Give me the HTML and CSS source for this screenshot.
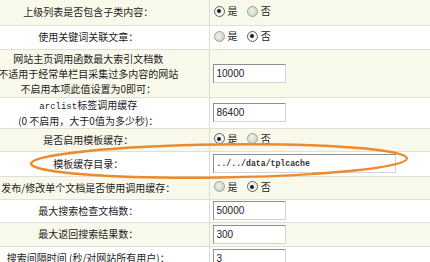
FILE: index.html
```html
<!DOCTYPE html>
<html lang="zh-CN">
<head>
    <meta charset="UTF-8">
    <title>系统基本参数</title>
    <link rel="stylesheet" href="styles.css">
</head>
<body>

    <table class="cfg">
        <colgroup>
            <col class="col-label">
            <col>
        </colgroup>

        <tr class="alt h25">
            <td class="label">上级列表是否包含子类内容：</td>
            <td class="value">
                <label class="radio"><span class="dot on"></span>是</label>
                <label class="radio"><span class="dot"></span>否</label>
            </td>
        </tr>
        <tr class="h24">
            <td class="label">使用关键词关联文章：</td>
            <td class="value">
                <label class="radio"><span class="dot"></span>是</label>
                <label class="radio"><span class="dot on"></span>否</label>
            </td>
        </tr>
        <tr class="alt h48">
            <td class="label lines">网站主页调用函数最大索引文档数<br>不适用于经常单栏目采集过多内容的网站<br>不启用本项此值设置为0即可：</td>
            <td class="value"><input type="text" class="field" value="10000"></td>
        </tr>
        <tr class="h29">
            <td class="label lines2"><span class="mono">arclist</span>标签调用缓存<br>(0 不启用，大于0值为多少秒)：</td>
            <td class="value"><input type="text" class="field" value="86400"></td>
        </tr>
        <tr class="alt h23">
            <td class="label">是否启用模板缓存：</td>
            <td class="value">
                <label class="radio"><span class="dot on"></span>是</label>
                <label class="radio"><span class="dot"></span>否</label>
            </td>
        </tr>
        <tr class="h25">
            <td class="label">模板缓存目录：</td>
            <td class="value"><input type="text" class="field wide" value="../../data/tplcache"></td>
        </tr>
        <tr class="alt h23">
            <td class="label">发布/修改单个文档是否使用调用缓存：</td>
            <td class="value">
                <label class="radio"><span class="dot"></span>是</label>
                <label class="radio"><span class="dot on"></span>否</label>
            </td>
        </tr>
        <tr class="h23">
            <td class="label">最大搜索检查文档数：</td>
            <td class="value"><input type="text" class="field" value="50000"></td>
        </tr>
        <tr class="alt h24">
            <td class="label">最大返回搜索结果数：</td>
            <td class="value"><input type="text" class="field" value="300"></td>
        </tr>
        <tr class="h24">
            <td class="label">搜索间隔时间 (秒/对网站所有用户)：</td>
            <td class="value"><input type="text" class="field" value="3"></td>
        </tr>
    </table>

    <!-- hand drawn mark around the cache dir row -->
    <svg class="mark" width="430" height="262" viewBox="0 0 430 262">
        <ellipse cx="219" cy="161" rx="188" ry="16.5" transform="rotate(-0.8 219 161)"
                 fill="none" stroke="#ec8a2c" stroke-width="2.4"/>
    </svg>

</body>
</html>
```

FILE: styles.css
```css
/* Page */
body {
    margin: 0;
    width: 430px;
    height: 262px;
    overflow: hidden;
    position: relative;
    background: #fff;
    font-family: "Noto Sans CJK SC", "DejaVu Sans", sans-serif;
    font-size: 10px;
    color: #1c1c1c;
}

/* Settings table, left edge is cut off in the shot */
.cfg {
    border-collapse: collapse;
    table-layout: fixed;
    width: 462px;
    margin-left: -32px;
}

.col-label {
    width: 241px;
}

.cfg td {
    padding: 0;
    border-bottom: 1px solid #dfe0d6;
    box-sizing: border-box;
}

.cfg tr.alt td {
    background: #f9f9eb; /* light beige stripe */
}

.h23 td { height: 23px; }
.h24 td { height: 24px; }
.h25 td { height: 25px; }
.h29 td { height: 29px; }
.h48 td { height: 48px; }

.label {
    text-align: center;
    white-space: nowrap;
    border-right: 1px solid #dcddd2;
    line-height: 14px;
}

.label.lines {
    line-height: 15px;
}

.mono {
    font-family: "Liberation Mono", monospace;
    font-size: 9px;
}

.value {
    padding-left: 3px !important;
    white-space: nowrap;
}

/* Radio pairs */
.radio {
    display: inline-flex;
    align-items: center;
    margin-right: 6px;
    line-height: 12px;
}

.dot {
    width: 9px;
    height: 9px;
    margin: 0 3px 0 1px;
    border-radius: 50%;
    border: 1px solid #9aa59a;
    background: radial-gradient(circle at 40% 40%, #eef2ea, #c3cdbd);
    position: relative;
}

.dot.on {
    border-color: #5e635e;
    background: #f3f3f0;
}

.dot.on::after {
    content: "";
    position: absolute;
    left: 2.5px;
    top: 2.5px;
    width: 4px;
    height: 4px;
    border-radius: 50%;
    background: #1e1e1e;
}

/* Text inputs */
.field {
    display: block;
    width: 73px;
    height: 19px;
    box-sizing: border-box;
    margin: 0;
    padding: 0 3px;
    border: 1px solid;
    border-color: #8e8e8e #d4d4d4 #d4d4d4 #8e8e8e;
    background: #fff;
    font-family: "Liberation Sans", Arial, sans-serif;
    font-size: 10px;
    color: #222;
}

.field.wide {
    width: 183px;
    font-family: "Liberation Mono", monospace;
    font-size: 8.2px;
    font-weight: bold;
    color: #333;
}

/* Orange annotation drawn over the table */
.mark {
    position: absolute;
    left: 0;
    top: 0;
    pointer-events: none;
}
```
